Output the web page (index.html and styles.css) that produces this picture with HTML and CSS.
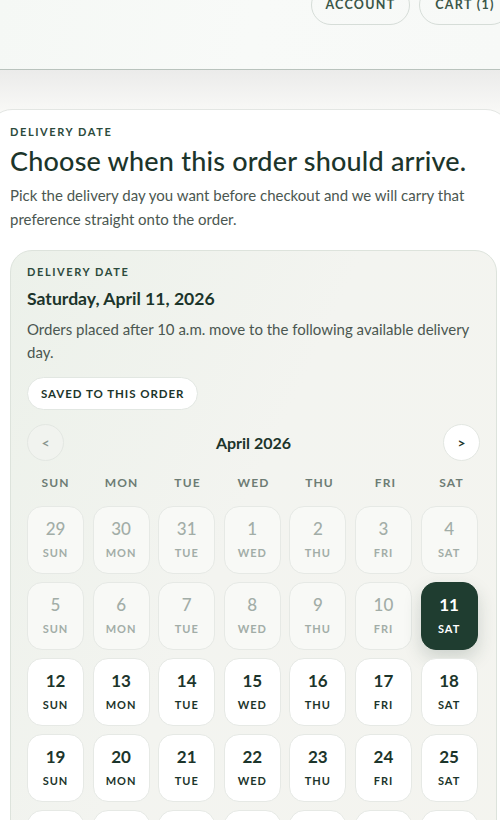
FILE: index.html
```html
<!DOCTYPE html>
<html lang="en">
<head>
<meta charset="utf-8">
<title>Delivery date</title>
<link rel="stylesheet" href="styles.css">
</head>
<body>
<header class="site-header">
  <nav class="header-nav">
    <a class="pill-link" href="#">ACCOUNT</a>
    <a class="pill-link" href="#">CART (1)</a>
  </nav>
</header>
<main class="page">
  <section class="card">
    <p class="eyebrow">DELIVERY DATE</p>
    <h1 class="title">Choose when this order should arrive.</h1>
    <p class="lead">Pick the delivery day you want before checkout and we will carry that preference straight onto the order.</p>

    <div class="panel">
      <p class="eyebrow small">DELIVERY DATE</p>
      <h2 class="selected-date">Saturday, April 11, 2026</h2>
      <p class="note">Orders placed after 10 a.m. move to the following available delivery day.</p>
      <span class="saved-pill">SAVED TO THIS ORDER</span>

      <div class="month-nav">
        <button class="nav-btn prev" type="button">&lt;</button>
        <span class="month-label">April 2026</span>
        <button class="nav-btn next" type="button">&gt;</button>
      </div>

      <div class="weekdays">
        <span>SUN</span><span>MON</span><span>TUE</span><span>WED</span><span>THU</span><span>FRI</span><span>SAT</span>
      </div>

      <div class="days">
        <button class="day off"><span class="num">29</span><span class="dow">SUN</span></button>
        <button class="day off"><span class="num">30</span><span class="dow">MON</span></button>
        <button class="day off"><span class="num">31</span><span class="dow">TUE</span></button>
        <button class="day off"><span class="num">1</span><span class="dow">WED</span></button>
        <button class="day off"><span class="num">2</span><span class="dow">THU</span></button>
        <button class="day off"><span class="num">3</span><span class="dow">FRI</span></button>
        <button class="day off"><span class="num">4</span><span class="dow">SAT</span></button>

        <button class="day off"><span class="num">5</span><span class="dow">SUN</span></button>
        <button class="day off"><span class="num">6</span><span class="dow">MON</span></button>
        <button class="day off"><span class="num">7</span><span class="dow">TUE</span></button>
        <button class="day off"><span class="num">8</span><span class="dow">WED</span></button>
        <button class="day off"><span class="num">9</span><span class="dow">THU</span></button>
        <button class="day off"><span class="num">10</span><span class="dow">FRI</span></button>
        <button class="day selected"><span class="num">11</span><span class="dow">SAT</span></button>

        <button class="day"><span class="num">12</span><span class="dow">SUN</span></button>
        <button class="day"><span class="num">13</span><span class="dow">MON</span></button>
        <button class="day"><span class="num">14</span><span class="dow">TUE</span></button>
        <button class="day"><span class="num">15</span><span class="dow">WED</span></button>
        <button class="day"><span class="num">16</span><span class="dow">THU</span></button>
        <button class="day"><span class="num">17</span><span class="dow">FRI</span></button>
        <button class="day"><span class="num">18</span><span class="dow">SAT</span></button>

        <button class="day"><span class="num">19</span><span class="dow">SUN</span></button>
        <button class="day"><span class="num">20</span><span class="dow">MON</span></button>
        <button class="day"><span class="num">21</span><span class="dow">TUE</span></button>
        <button class="day"><span class="num">22</span><span class="dow">WED</span></button>
        <button class="day"><span class="num">23</span><span class="dow">THU</span></button>
        <button class="day"><span class="num">24</span><span class="dow">FRI</span></button>
        <button class="day"><span class="num">25</span><span class="dow">SAT</span></button>

        <button class="day"><span class="num">26</span><span class="dow">SUN</span></button>
        <button class="day"><span class="num">27</span><span class="dow">MON</span></button>
        <button class="day"><span class="num">28</span><span class="dow">TUE</span></button>
        <button class="day"><span class="num">29</span><span class="dow">WED</span></button>
        <button class="day"><span class="num">30</span><span class="dow">THU</span></button>
        <button class="day"><span class="num">1</span><span class="dow">FRI</span></button>
        <button class="day"><span class="num">2</span><span class="dow">SAT</span></button>
      </div>
    </div>
  </section>
</main>
</body>
</html>
```

FILE: styles.css
```css
* { box-sizing: border-box; }

html, body {
  margin: 0;
  padding: 0;
}

body {
  font-family: Lato, "Noto Sans", sans-serif;
  color: #1f3b2f;
  background: linear-gradient(180deg, #ebebea 70px, #f8f8f6 110px, #f8f8f6 100%);
  overflow: hidden;
  height: 820px;
}

.site-header {
  height: 70px;
  background: linear-gradient(100deg, #f5f8f5 0%, #f8faf8 50%, #f7f9f7 100%);
  border-bottom: 1px solid #b9c3bd;
  display: flex;
  justify-content: flex-end;
  align-items: flex-start;
}

.header-nav {
  display: flex;
  gap: 9px;
  margin-top: -15px;
  margin-right: -11px;
}

.pill-link {
  display: inline-flex;
  align-items: center;
  justify-content: center;
  height: 40px;
  padding: 0 0 2px;
  border: 1px solid #d6ddd8;
  border-radius: 20px;
  font-size: 12.5px;
  font-weight: 700;
  letter-spacing: 1.3px;
  color: #3a5648;
  text-decoration: none;
}

.pill-link:first-child { width: 99px; }
.pill-link:last-child { width: 92px; }

.page {
  padding-top: 39px;
}

.card {
  margin-left: -12px;
  width: 522px;
  background: #ffffff;
  border: 1px solid #e3e6e3;
  border-radius: 24px;
  padding: 14px 0 0 21px;
  min-height: 760px;
}

.eyebrow {
  margin: 0;
  font-size: 11px;
  font-weight: 700;
  letter-spacing: 1.6px;
  color: #2c4a3c;
  line-height: 16px;
}

.title {
  margin: 4px 0 0;
  font-size: 27px;
  font-weight: 500;
  line-height: 34px;
  color: #1c352b;
  letter-spacing: 0.2px;
}

.lead {
  margin: 5px 0 0;
  width: 482px;
  font-size: 15px;
  line-height: 24px;
  color: #4b5751;
}

.panel {
  margin-top: 19px;
  width: 487px;
  border: 1px solid #dde3dc;
  border-radius: 22px;
  background: linear-gradient(115deg, #ecf1ea 0%, #f3f4f0 45%, #f4f4ef 100%);
  padding: 13px 16px 20px 16px;
}

.eyebrow.small {
  font-size: 11px;
}

.selected-date {
  margin: 7px 0 0;
  font-size: 17.6px;
  font-weight: 700;
  line-height: 24px;
  color: #1c352b;
}

.note {
  margin: 7px 0 0;
  font-size: 15px;
  line-height: 23px;
  color: #4b5751;
}

.saved-pill {
  display: inline-flex;
  align-items: center;
  margin-top: 13px;
  height: 33px;
  padding: 0 13px;
  background: #ffffff;
  border: 1px solid #e2e7e2;
  border-radius: 17px;
  font-size: 11.5px;
  font-weight: 700;
  letter-spacing: 0.95px;
  color: #1c352b;
}

.month-nav {
  margin-top: 14px;
  display: flex;
  align-items: center;
  justify-content: space-between;
}

.nav-btn {
  width: 37px;
  height: 37px;
  border-radius: 50%;
  border: 1px solid #e3e7e2;
  font-family: inherit;
  font-size: 14px;
  font-weight: 700;
  padding: 0;
  display: flex;
  align-items: center;
  justify-content: center;
}

.nav-btn.prev {
  background: #f1f3ef;
  color: #8a968f;
}

.nav-btn.next {
  background: #ffffff;
  color: #1c352b;
}

.month-label {
  font-size: 16px;
  font-weight: 700;
  color: #1c352b;
}

.weekdays {
  margin-top: 14px;
  display: grid;
  grid-template-columns: repeat(7, 1fr);
  gap: 9px;
  text-align: center;
  font-size: 12px;
  font-weight: 700;
  letter-spacing: 1.1px;
  color: #6d7c74;
  line-height: 16px;
}

.days {
  margin-top: 15px;
  display: grid;
  grid-template-columns: repeat(7, 57px);
  grid-auto-rows: 68px;
  column-gap: 8.6px;
  row-gap: 8px;
}

.day {
  font-family: inherit;
  border: 1px solid #e6e9e5;
  border-radius: 15px;
  background: #ffffff;
  color: #1c352b;
  display: flex;
  flex-direction: column;
  align-items: center;
  justify-content: center;
  gap: 7px;
  padding: 0 0 2px;
}

.day .num {
  font-size: 17px;
  font-weight: 700;
  line-height: 20px;
}

.day .dow {
  font-size: 11px;
  font-weight: 700;
  letter-spacing: 1px;
  line-height: 14px;
}

.day.off {
  background: #f8f9f6;
  color: #a2ada7;
}

.day.off .num { font-weight: 500; }

.day.selected {
  background: #1f3d30;
  border-color: #1f3d30;
  color: #ffffff;
  box-shadow: 0 8px 18px rgba(31, 61, 48, 0.18);
}
```
